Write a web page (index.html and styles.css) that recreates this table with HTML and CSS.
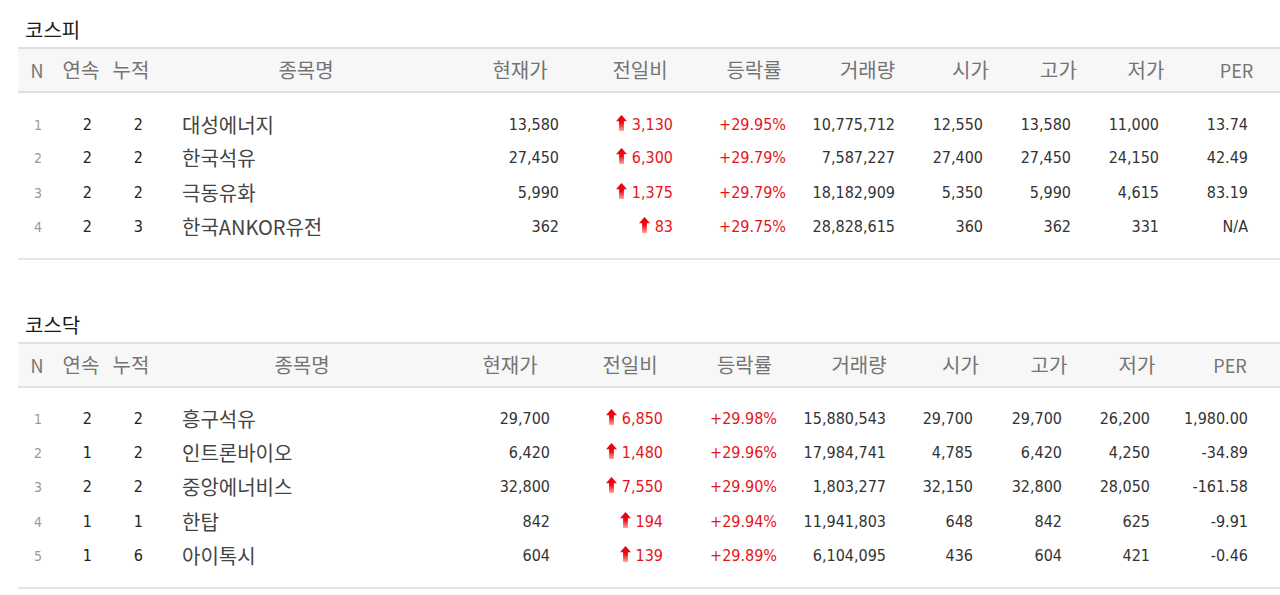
FILE: index.html
```html
<!DOCTYPE html>
<html lang="ko">
<head>
<meta charset="utf-8">
<title>상한가 종목</title>
<link rel="stylesheet" href="styles.css">
</head>
<body>
<svg class="defs" width="0" height="0" aria-hidden="true">
  <defs>
    <linearGradient id="upgrad" x1="0" y1="0" x2="0" y2="1">
      <stop offset="0" stop-color="#e8000a"/>
      <stop offset="0.5" stop-color="#ee0a12"/>
      <stop offset="1" stop-color="#ffa4a4"/>
    </linearGradient>
    <symbol id="up" viewBox="0 0 11 16">
      <path d="M5.5 0 L11 6.2 L7.9 6.2 L7.9 16 L3.1 16 L3.1 6.2 L0 6.2 Z" fill="url(#upgrad)"/>
    </symbol>
  </defs>
</svg>
<div class="page">
  <section class="market">
    <h2 class="market-title">코스피</h2>
    <table class="stocks stocks--kospi">
      <colgroup><col><col><col><col><col><col><col><col><col><col><col><col></colgroup>
      <thead>
        <tr><th class="latin">N</th><th>연속</th><th>누적</th><th>종목명</th><th>현재가</th><th>전일비</th><th>등락률</th><th>거래량</th><th>시가</th><th>고가</th><th>저가</th><th class="latin">PER</th></tr>
      </thead>
      <tbody>
        <tr><td class="no">1</td><td class="cnt">2</td><td class="cnt">2</td><td class="name">대성에너지</td><td class="val">13,580</td><td class="val up"><svg class="arrow"><use href="#up"/></svg>3,130</td><td class="val up">+29.95%</td><td class="val">10,775,712</td><td class="val">12,550</td><td class="val">13,580</td><td class="val">11,000</td><td class="val">13.74</td></tr>
        <tr><td class="no">2</td><td class="cnt">2</td><td class="cnt">2</td><td class="name">한국석유</td><td class="val">27,450</td><td class="val up"><svg class="arrow"><use href="#up"/></svg>6,300</td><td class="val up">+29.79%</td><td class="val">7,587,227</td><td class="val">27,400</td><td class="val">27,450</td><td class="val">24,150</td><td class="val">42.49</td></tr>
        <tr><td class="no">3</td><td class="cnt">2</td><td class="cnt">2</td><td class="name">극동유화</td><td class="val">5,990</td><td class="val up"><svg class="arrow"><use href="#up"/></svg>1,375</td><td class="val up">+29.79%</td><td class="val">18,182,909</td><td class="val">5,350</td><td class="val">5,990</td><td class="val">4,615</td><td class="val">83.19</td></tr>
        <tr><td class="no">4</td><td class="cnt">2</td><td class="cnt">3</td><td class="name">한국ANKOR유전</td><td class="val">362</td><td class="val up"><svg class="arrow"><use href="#up"/></svg>83</td><td class="val up">+29.75%</td><td class="val">28,828,615</td><td class="val">360</td><td class="val">362</td><td class="val">331</td><td class="val">N/A</td></tr>
      </tbody>
    </table>
  </section>

  <section class="market">
    <h2 class="market-title">코스닥</h2>
    <table class="stocks stocks--kosdaq">
      <colgroup><col><col><col><col><col><col><col><col><col><col><col><col></colgroup>
      <thead>
        <tr><th class="latin">N</th><th>연속</th><th>누적</th><th>종목명</th><th>현재가</th><th>전일비</th><th>등락률</th><th>거래량</th><th>시가</th><th>고가</th><th>저가</th><th class="latin">PER</th></tr>
      </thead>
      <tbody>
        <tr><td class="no">1</td><td class="cnt">2</td><td class="cnt">2</td><td class="name">흥구석유</td><td class="val">29,700</td><td class="val up"><svg class="arrow"><use href="#up"/></svg>6,850</td><td class="val up">+29.98%</td><td class="val">15,880,543</td><td class="val">29,700</td><td class="val">29,700</td><td class="val">26,200</td><td class="val">1,980.00</td></tr>
        <tr><td class="no">2</td><td class="cnt">1</td><td class="cnt">2</td><td class="name">인트론바이오</td><td class="val">6,420</td><td class="val up"><svg class="arrow"><use href="#up"/></svg>1,480</td><td class="val up">+29.96%</td><td class="val">17,984,741</td><td class="val">4,785</td><td class="val">6,420</td><td class="val">4,250</td><td class="val">-34.89</td></tr>
        <tr><td class="no">3</td><td class="cnt">2</td><td class="cnt">2</td><td class="name">중앙에너비스</td><td class="val">32,800</td><td class="val up"><svg class="arrow"><use href="#up"/></svg>7,550</td><td class="val up">+29.90%</td><td class="val">1,803,277</td><td class="val">32,150</td><td class="val">32,800</td><td class="val">28,050</td><td class="val">-161.58</td></tr>
        <tr><td class="no">4</td><td class="cnt">1</td><td class="cnt">1</td><td class="name">한탑</td><td class="val">842</td><td class="val up"><svg class="arrow"><use href="#up"/></svg>194</td><td class="val up">+29.94%</td><td class="val">11,941,803</td><td class="val">648</td><td class="val">842</td><td class="val">625</td><td class="val">-9.91</td></tr>
        <tr><td class="no">5</td><td class="cnt">1</td><td class="cnt">6</td><td class="name">아이톡시</td><td class="val">604</td><td class="val up"><svg class="arrow"><use href="#up"/></svg>139</td><td class="val up">+29.89%</td><td class="val">6,104,095</td><td class="val">436</td><td class="val">604</td><td class="val">421</td><td class="val">-0.46</td></tr>
      </tbody>
    </table>
  </section>
</div>
</body>
</html>
```

FILE: styles.css
```css
html, body {
  margin: 0;
  padding: 0;
  background: #ffffff;
  overflow: hidden;
}

.defs {
  display: block;
  width: 0;
  height: 0;
  overflow: hidden;
}

.page {
  padding: 18px 0 0 18px;
  font-family: "Noto Sans CJK KR", "Noto Sans", sans-serif;
}

.market + .market {
  margin-top: 53px;
}

.market-title {
  margin: 0 0 5px 0;
  padding-left: 7px;
  height: 24px;
  line-height: 24px;
  font-size: 20px;
  font-weight: 400;
  color: #1a1a1a;
}

.stocks {
  width: 1262px;
  table-layout: fixed;
  border-collapse: collapse;
  border-bottom: 2px solid #e6e6e6;
}

.stocks th {
  height: 42px;
  padding: 0;
  font-family: "Noto Sans CJK KR", "Noto Sans", sans-serif;
  font-size: 20px;
  line-height: 24px;
  font-weight: 400;
  color: #747474;
  text-align: center;
  background: #f7f7f7;
  border-top: 2px solid #e0e0e0;
  border-bottom: 2px solid #e0e0e0;
  white-space: nowrap;
}

.stocks th.latin {
  font-size: 18px;
}

.stocks td {
  box-sizing: border-box;
  height: 34.3px;
  padding: 0;
  line-height: 20px;
  vertical-align: middle;
  font-family: "DejaVu Sans Condensed", "DejaVu Sans", sans-serif;
  font-stretch: condensed;
  font-size: 16px;
  color: #333333;
  white-space: nowrap;
}

.stocks tbody tr:first-child td {
  height: 49.3px;
  padding-top: 15px;
}

.stocks tbody tr:last-child td {
  height: 48.8px;
  padding-bottom: 14.5px;
}

.stocks td.no {
  text-align: center;
  font-size: 14px;
  color: #9a9a9a;
  padding-left: 2px;
}

.stocks td.cnt {
  text-align: right;
  color: #222222;
}

.stocks td:nth-child(2) { padding-right: 14px; }
.stocks td:nth-child(3) { padding-right: 13px; }

.stocks td.name {
  text-align: left;
  padding-left: 26px;
  font-family: "Noto Sans CJK KR", "Noto Sans", sans-serif;
  font-stretch: normal;
  font-size: 20px;
  color: #444444;
}

.stocks td.val {
  text-align: right;
}

.stocks td.up {
  color: #e5141b;
}

.arrow {
  width: 11px;
  height: 16px;
  margin-right: 5px;
  vertical-align: -1px;
}

/* 코스피 column geometry */
.stocks--kospi col:nth-child(1) { width: 38px; }
.stocks--kospi col:nth-child(2) { width: 50px; }
.stocks--kospi col:nth-child(3) { width: 50px; }
.stocks--kospi col:nth-child(4) { width: 300px; }
.stocks--kospi col:nth-child(5) { width: 128px; }
.stocks--kospi col:nth-child(6) { width: 112px; }
.stocks--kospi col:nth-child(7) { width: 116px; }
.stocks--kospi col:nth-child(8) { width: 111px; }
.stocks--kospi col:nth-child(9) { width: 95px; }
.stocks--kospi col:nth-child(10) { width: 81px; }
.stocks--kospi col:nth-child(11) { width: 94px; }
.stocks--kospi col:nth-child(12) { width: 87px; }

.stocks--kospi td:nth-child(5) { padding-right: 25px; }
.stocks--kospi td:nth-child(6) { padding-right: 23px; }
.stocks--kospi td:nth-child(7) { padding-right: 26px; }
.stocks--kospi td:nth-child(8) { padding-right: 28px; }
.stocks--kospi td:nth-child(9) { padding-right: 35px; }
.stocks--kospi td:nth-child(10) { padding-right: 28px; }
.stocks--kospi td:nth-child(11) { padding-right: 34px; }
.stocks--kospi td:nth-child(12) { padding-right: 32px; }

/* 코스닥 column geometry */
.stocks--kosdaq col:nth-child(1) { width: 38px; }
.stocks--kosdaq col:nth-child(2) { width: 50px; }
.stocks--kosdaq col:nth-child(3) { width: 50px; }
.stocks--kosdaq col:nth-child(4) { width: 292px; }
.stocks--kosdaq col:nth-child(5) { width: 124px; }
.stocks--kosdaq col:nth-child(6) { width: 116px; }
.stocks--kosdaq col:nth-child(7) { width: 113px; }
.stocks--kosdaq col:nth-child(8) { width: 116px; }
.stocks--kosdaq col:nth-child(9) { width: 87px; }
.stocks--kosdaq col:nth-child(10) { width: 90px; }
.stocks--kosdaq col:nth-child(11) { width: 86px; }
.stocks--kosdaq col:nth-child(12) { width: 100px; }

.stocks--kosdaq td:nth-child(5) { padding-right: 22px; }
.stocks--kosdaq td:nth-child(6) { padding-right: 25px; }
.stocks--kosdaq td:nth-child(7) { padding-right: 24px; }
.stocks--kosdaq td:nth-child(8) { padding-right: 31px; }
.stocks--kosdaq td:nth-child(9) { padding-right: 31px; }
.stocks--kosdaq td:nth-child(10) { padding-right: 32px; }
.stocks--kosdaq td:nth-child(11) { padding-right: 30px; }
.stocks--kosdaq td:nth-child(12) { padding-right: 32px; }
```
